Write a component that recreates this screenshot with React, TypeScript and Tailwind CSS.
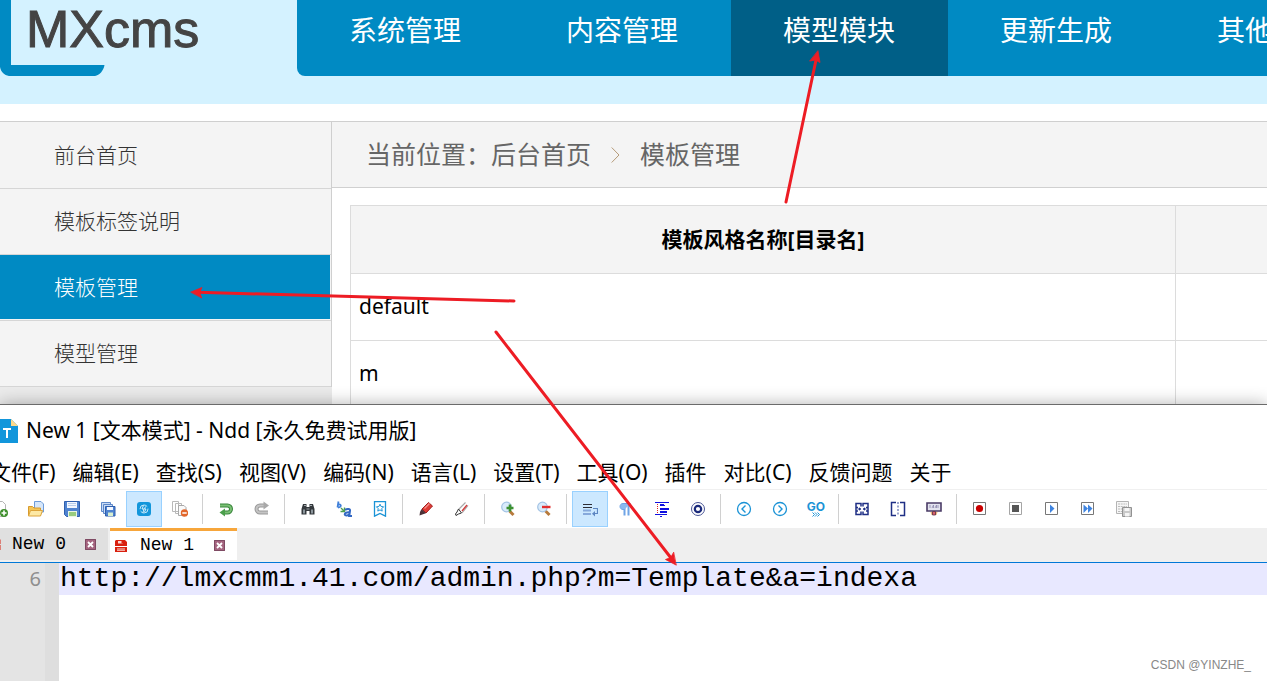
import React from 'react';
import clsx from 'clsx';

const NAV = ['系统管理', '内容管理', '模型模块', '更新生成', '其他'];
const SIDE = ['前台首页', '模板标签说明', '模板管理', '模型管理'];
const MENU = ['文件(F)', '编辑(E)', '查找(S)', '视图(V)', '编码(N)', '语言(L)', '设置(T)', '工具(O)', '插件', '对比(C)', '反馈问题', '关于'];

/* ── 16px toolbar drawings ── */
const ICONS: Record<string, React.ReactNode> = {
  new: (
    <>
      <path d="M2.5 .5h8l3 3v12h-11z" fill="#fff" stroke="#b5b5b5" />
      <circle cx="12" cy="12" r="4" fill="#3f8f2c" />
      <path d="M12 9.5v5M9.5 12h5" stroke="#fff" strokeWidth="1.6" />
    </>
  ),
  open: (
    <>
      <path d="M6.500 .5h6.500l2.500 2.500v8h-9z" fill="#d5e6fa" stroke="#6d9bd8" />
      <path d="M.5 14.500v-9h4l1.500 1.500h6.500v7.500z" fill="#f3c557" stroke="#d79a2e" />
      <path d="M.5 15l2-5.500h12L12.500 15z" fill="#fde9a5" stroke="#dda43a" />
    </>
  ),
  save: (
    <>
      <path d="M.5 .5h15v15H2.500l-2-2z" fill="#4f83d0" stroke="#2f5fae" />
      <path d="M3 1h10v6H3z" fill="#f2f7ff" />
      <path d="M4 2.500h8M4 4.500h8" stroke="#b8cdea" />
      <path d="M4 10h9v6H4z" fill="#e9f5e2" />
      <path d="M5 12h7M5 14h7" stroke="#7fbf5f" strokeWidth="1.400" />
    </>
  ),
  saveAll: (
    <>
      <path d="M1.500 1.500h9v9h-9z" fill="#c9dbf4" stroke="#5d88c9" />
      <path d="M3.500 3.500h9v9h-9z" fill="#c9dbf4" stroke="#5d88c9" />
      <path d="M5.500 5.500h9.500V15h-9.500z" fill="#4f83d0" stroke="#2f5fae" />
      <path d="M7 6h6v3H7z" fill="#f2f7ff" />
      <path d="M8 11.500h5V15H8z" fill="#d9efcf" />
    </>
  ),
  sync: (
    <>
      <rect x="1" y="1" width="14" height="14" rx="3" fill="#1296db" />
      <circle cx="8" cy="8" r="4" fill="none" stroke="#d3eefb" strokeWidth=".9" strokeDasharray="10 2" />
      <path d="M7.500 4.500 6 8h2l-1 3.500M9.500 5.500 8.500 8H10l-1.500 3" fill="none" stroke="#fff" strokeWidth=".8" />
    </>
  ),
  closeAll: (
    <>
      <path d="M.5 .5h6v10h-6zM3.500 2.500h6v10h-6z" fill="#fff" stroke="#b9b9b9" />
      <path d="M6.500 4.500H12l2 2v8H6.500z" fill="#fafafa" stroke="#a9a9a9" />
      <circle cx="12.500" cy="12" r="3.700" fill="#e2662b" />
      <path d="M10.300 12h4.400" stroke="#fff" strokeWidth="1.500" />
    </>
  ),
  undo: (
    <>
      <path d="M2 4.500h7.500a3.500 3.500 0 0 1 0 7H6" fill="none" stroke="#37843a" strokeWidth="4" />
      <path d="M2 4.500h7.500a3.500 3.500 0 0 1 0 7H6" fill="none" stroke="#79bf73" strokeWidth="2" />
      <path d="M7 7.500v8L1.500 11.500z" fill="#4a9e4b" />
    </>
  ),
  redo: (
    <>
      <path d="M14 11.500H6a3.500 3.500 0 0 1 0-7h4" fill="none" stroke="#999" strokeWidth="4" />
      <path d="M14 11.500H6a3.500 3.500 0 0 1 0-7h4" fill="none" stroke="#c4c4c4" strokeWidth="2" />
      <path d="M9.500 .5v8L15 4.500z" fill="#a9a9a9" />
    </>
  ),
  find: (
    <>
      <path d="M3 3h3.500v3h3V3H13l1.500 5v5.500H9.500V10h-3v3.500h-5V8z" fill="#34393d" />
      <path d="M3 8.500h2v4H3zM11 8.500h2v4h-2z" fill="#8b959b" />
      <path d="M4 4.500h2M10 4.500h2M6.500 8h3" stroke="#a1a9ad" />
    </>
  ),
  replace: (
    <>
      <path d="M2.500 .5 1.500 6.500M2 3.800c3.500-1.500 4 2.700 0 2.700" fill="none" stroke="#3f7fd9" strokeWidth="1.800" />
      <path d="m5 7 3 3M8.500 6.500v4h-4" fill="none" stroke="#4fa050" strokeWidth="1.400" />
      <path d="M9 8.800c2-1.300 5.500-1.300 5 1l-.8 5.200H16M13.800 11.500c-3-.5-5.300.5-5 2s3.500 1.300 4.500-.5" fill="none" stroke="#3268c4" strokeWidth="2" />
    </>
  ),
  bookmark: (
    <>
      <path d="M2.500 .7h11v14.500L8 12.500l-5.500 2.700z" fill="#fff" stroke="#1b93d6" strokeWidth="1.300" />
      <path d="m8 3.200 1.100 2.300 2.500.3-1.800 1.800.4 2.500L8 8.900l-2.200 1.200.4-2.500-1.800-1.800 2.500-.3z" fill="none" stroke="#1b93d6" />
    </>
  ),
  marker: (
    <>
      <path d="m4 8 6.500-6.500L14.500 5 8 12z" fill="#df3b35" stroke="#a31d1d" />
      <path d="m6.500 7.500 5-5" stroke="#f4938d" strokeWidth="1.300" />
      <path d="m3.500 8 4.500 4.300-3 1-3.500 1.200.5-3.500z" fill="#4b3138" />
    </>
  ),
  clearMark: (
    <>
      <path d="m4.500 8.500 7-7M8 12l6-7.500" stroke="#a9a9a9" strokeWidth="1.200" />
      <path d="m8 10 5-6" stroke="#d33b3b" strokeWidth="1.400" />
      <path d="M4.500 8 7.500 12l-3 1-2.500 1.500-.5-1.500 1.500-2z" fill="#fff" stroke="#333" />
    </>
  ),
  zoomIn: (
    <>
      <path d="m9.500 10 4 4" stroke="#b77a3c" strokeWidth="3" />
      <circle cx="6.500" cy="6" r="4.800" fill="#d9ebfb" stroke="#a3c3e4" strokeWidth="1.200" />
      <path d="M10 3.500v7M6.500 7h7" stroke="#3c9131" strokeWidth="2.600" />
    </>
  ),
  zoomOut: (
    <>
      <path d="m9.500 10 4 4" stroke="#b77a3c" strokeWidth="3" />
      <circle cx="6.500" cy="6" r="4.800" fill="#d9ebfb" stroke="#a3c3e4" strokeWidth="1.200" />
      <path d="M6 6h8.500" stroke="#e32f2f" strokeWidth="2.400" />
    </>
  ),
  wrap: (
    <>
      <path d="M1 3.500h9M1 6.500h9" stroke="#2d2d35" strokeWidth="1.200" />
      <path d="M1 9.500h8M1 13h8" stroke="#86a9dc" strokeWidth="2" />
      <path d="M11 7.500h4.500v5H12" fill="none" stroke="#5d86c2" strokeWidth="1.200" />
      <path d="M13 10v5.500l-3-2.800z" fill="#5d86c2" />
    </>
  ),
  pilcrow: (
    <>
      <path d="M6.500 2v12.500M10.500 2v12.500" stroke="#6fa4e6" strokeWidth="2" />
      <path d="M12.500 2.500H5C1 2.500 1 8.500 5 8.500h1.500" fill="#8ab8ef" stroke="#6fa4e6" />
    </>
  ),
  indent: (
    <>
      <path d="M1 1h14v1H1zM6 4h5v1H6zM6 7h9v2H6zM6 10h7v2H6zM1 13h12v1H1zM6 15h2v1H6z" fill="#1010e0" />
      <path d="M6 3h4v2H6z" fill="#1010e0" />
      <path d="M3.500 3v9.500" stroke="#e02020" strokeDasharray="1 1" />
    </>
  ),
  target: (
    <>
      <circle cx="8" cy="8" r="6.500" fill="none" stroke="#4a5596" />
      <circle cx="8" cy="8" r="3.200" fill="#fff" stroke="#1b2a7b" strokeWidth="2.200" />
    </>
  ),
  back: (
    <>
      <circle cx="8" cy="8" r="6.500" fill="none" stroke="#1b93d6" strokeWidth="1.300" />
      <path d="M9.500 4.500 6 8l3.500 3.500" fill="none" stroke="#1b93d6" strokeWidth="1.400" />
    </>
  ),
  forward: (
    <>
      <circle cx="8" cy="8" r="6.500" fill="none" stroke="#1b93d6" strokeWidth="1.300" />
      <path d="M6.500 4.500 10 8l-3.500 3.500" fill="none" stroke="#1b93d6" strokeWidth="1.400" />
    </>
  ),
  split: (
    <>
      <path d="M7 5.500v-3H2v4h2M2 6v4h2M2 9.500v4h5v-3M9 5.500v-3h5v4h-2M14 6v4h-2M14 9.500v4H9v-3" fill="none" stroke="#1f2f85" strokeWidth="1.500" />
      <path d="M3.500 8H7M9 8h3.500" stroke="#1f2f85" strokeWidth="1.200" />
      <path d="M5 6.200 7.200 8 5 9.800zM11 6.200 8.800 8 11 9.800z" fill="#1f2f85" />
    </>
  ),
  compare: (
    <>
      <path d="M6 1.500H1.500v13H6M10 1.500h4.500v13H10" fill="none" stroke="#1f2f85" strokeWidth="1.500" />
      <path d="M8 1v14" stroke="#7380b8" strokeWidth="1.400" strokeDasharray="2 1.500" />
    </>
  ),
  monitor: (
    <>
      <path d="M1 2h14v8H1z" fill="#e3e3ee" stroke="#4a3b66" strokeWidth="1.600" />
      <path d="M4 4v3M6 7l1.500-3V7M9 7l1.500-3V7M12 4v3" fill="none" stroke="#8b87ac" strokeWidth=".8" />
      <path d="M4.500 11h7l-1 3h-5z" fill="#efb878" />
      <path d="M6.500 10.500h3V14h-3z" fill="#d9606c" stroke="#5a2e46" strokeWidth=".8" />
    </>
  ),
  record: (
    <>
      <path d="M1.500 1.500h12v12h-12z" fill="#fff" stroke="#777" />
      <circle cx="7.500" cy="7.500" r="3.600" fill="#c90000" />
    </>
  ),
  stop: (
    <>
      <path d="M1.500 1.500h12v12h-12z" fill="#fff" stroke="#a5a5a5" />
      <path d="M4 4h7v7H4z" fill="#555" />
    </>
  ),
  play: (
    <>
      <path d="M1.500 1.500h12v12h-12z" fill="#fff" stroke="#777" />
      <path d="M6 3.500 10.500 7.500 6 12z" fill="#3f84e0" />
    </>
  ),
  playAll: (
    <>
      <path d="M1.500 1.500h12v12h-12z" fill="#fff" stroke="#777" />
      <path d="M3.500 3.500 8 7.500 3.500 12zM8 3.500l4.500 4L8 12z" fill="#3f84e0" />
    </>
  ),
  saveMacro: (
    <>
      <path d="M.5 .5h12v12H.5z" fill="#f6f6f6" stroke="#b4b4b4" />
      <path d="M2 3h9M2 5.500h9M2 8h4M2 10.500h4" stroke="#bcbcbc" strokeDasharray="2 .7" />
      <path d="M6.500 6.500h9v9h-9z" fill="#c9c9c9" stroke="#929292" />
      <path d="M8.500 7h5v3h-5zM9 12h4.500v3.500H9z" fill="#f5f5f5" />
    </>
  ),
};

const TOOL_GROUPS = [
  ['new', 'open', 'save', 'saveAll', 'sync', 'closeAll'],
  ['undo', 'redo'],
  ['find', 'replace', 'bookmark'],
  ['marker', 'clearMark'],
  ['zoomIn', 'zoomOut'],
  ['wrap', 'pilcrow', 'indent', 'target'],
  ['back', 'forward', 'go'],
  ['split', 'compare', 'monitor'],
  ['record', 'stop', 'play', 'playAll', 'saveMacro'],
];

const PRESSED = ['sync', 'wrap'];

const ToolButton: React.FC<{ name: string }> = ({ name }) => (
  <button
    aria-label={name}
    className={clsx(
      'w-9 h-9 shrink-0 flex flex-col items-center justify-center border',
      PRESSED.includes(name) ? 'bg-[#cce8ff] border-[#99d1ff]' : 'border-transparent',
    )}
  >
    {name === 'go' ? (
      <>
        <span className="font-['Inter'] font-bold text-[12px] leading-[10px] text-[#1b93d6]">GO</span>
        <svg width="8" height="5" viewBox="0 0 8 5" fill="none" stroke="#1b93d6">
          <path d="M.5 .5l2 2-2 2M3 .5l2 2-2 2M5.500 .5l2 2-2 2" />
        </svg>
      </>
    ) : (
      <svg width="16" height="16" viewBox="0 0 16 16" fill="none">{ICONS[name]}</svg>
    )}
  </button>
);

const TabClose: React.FC<{ label: string }> = ({ label }) => (
  <button aria-label={label} className="w-[11px] h-[11px] shrink-0 bg-[#a5647f]">
    <svg width="11" height="11" viewBox="0 0 11 11" fill="none">
      <path d="M.5 .5h10v10H.5z" stroke="#7e4a63" />
      <path d="m3 3 5 5M8 3 3 8" stroke="#fff" strokeWidth="1.800" />
    </svg>
  </button>
);

const DiskIcon: React.FC<{ className?: string }> = ({ className }) => (
  <svg width="12" height="12" viewBox="0 0 12 12" className={clsx('shrink-0', className)}>
    <path d="M1 0h9l2 2v4H0V1zM0 7h12v5H0z" fill="#d9200f" />
    <path d="M3 1h5v2.500H3zM2 8.500h8v1H2zM2 10.300h8v.8H2z" fill="#fbd9d4" />
    <path d="M6.500 1h1.500v2.500H6.500z" fill="#d9200f" />
  </svg>
);

function Header() {
  return (
    <header className="h-[104px] bg-[#d4f2ff] flex items-start overflow-hidden">
      <div className="relative w-[297px] h-[76px] shrink-0">
        <svg width="106" height="76" viewBox="0 0 106 76" className="block">
          <path d="M0 0h11v65h93.500c-1 6-5 10-9.500 11H9c-5-1-8-4-9-9z" fill="#008ac3" />
        </svg>
        <span className="absolute left-[26px] top-0 font-['Liberation_Sans'] text-[52px] leading-[58px] text-[#444] [-webkit-text-stroke:1px_#444]">MXcms</span>
      </div>
      <nav className="flex-1 min-w-0 h-[76px] flex bg-[#008ac3] rounded-bl-lg overflow-hidden">
        {NAV.map((item, i) => (
          <a key={item} href="#" className={clsx('w-[217px] shrink-0 pl-13 text-[28px] leading-[60px] text-white whitespace-nowrap', i === 2 && 'bg-[#005f87]')}>
            {item}
          </a>
        ))}
      </nav>
    </header>
  );
}

function Sidebar() {
  return (
    <aside className="w-[332px] shrink-0 bg-[#ebebeb]">
      <ul className="bg-[#f4f4f4] border-r border-[#cfcfcf] pt-px">
        {SIDE.map((item, i) => (
          <li key={item} className="h-[66px] border-b border-[#d6d6d6] pr-px">
            <a
              href="#"
              className={clsx(
                'block pl-[54px] text-[21px] leading-[64px] font-light',
                i === 2 ? 'bg-[#008ac3] text-white' : 'text-[#333]',
              )}
            >
              {item}
            </a>
          </li>
        ))}
      </ul>
    </aside>
  );
}

function TemplateList() {
  return (
    <main className="flex-1 min-w-0">
      <div className="h-[66px] pl-[34px] flex items-center bg-[#f4f4f4] border-b border-[#d0d0d0] text-[25px] text-[#666]">
        <span>当前位置：</span>
        <a href="#">后台首页</a>
        <svg width="9" height="16" viewBox="0 0 9 16" fill="none" className="mx-5">
          <path d="M.7 .5 8 8 .7 15.500" stroke="#b59a78" />
        </svg>
        <a href="#">模板管理</a>
      </div>
      <div className="pl-[18px] pt-[17px]">
        <table className="w-full table-fixed border-collapse text-[21px] text-black">
          <thead>
            <tr className="h-[68px] bg-[#f4f4f4]">
              <th className="w-[90%] border border-[#dcdcdc] font-bold">模板风格名称[目录名]</th>
              <th className="border-y border-[#dcdcdc]" />
            </tr>
          </thead>
          <tbody>
            {['default', 'm'].map((name) => (
              <tr key={name} className="h-[67px]">
                <td className="border border-[#dcdcdc] pl-2">{name}</td>
                <td className="border-y border-[#dcdcdc]" />
              </tr>
            ))}
          </tbody>
        </table>
      </div>
    </main>
  );
}

function EditorWindow() {
  return (
    <section className="relative flex-1 flex flex-col bg-white border-t border-[#6b6b6b] shadow-[0_0_16px_rgba(0,0,0,0.3)]">
      <div className="h-[52px] flex items-center gap-2 text-[21px] text-black">
        <svg width="18" height="24" viewBox="0 0 18 24" className="shrink-0">
          <path d="M0 0h11l7 7v17H0z" fill="#1296db" />
          <path d="M11 0l7 7h-7z" fill="#ffd98a" />
          <path d="M3 10h8M7 10v9" stroke="#fff" strokeWidth="2" />
        </svg>
        <h1>New 1 [文本模式] - Ndd [永久免费试用版]</h1>
      </div>
      <div className="h-8 -ml-2.5 flex items-center gap-[17px] text-[21px] text-black">
        {MENU.map((item) => (
          <button key={item} className="shrink-0 whitespace-nowrap">{item}</button>
        ))}
      </div>
      <div className="h-[39px] -ml-[18px] flex items-center border-t border-[#f0f0f0]">
        {TOOL_GROUPS.map((group, i) => (
          <React.Fragment key={group[0]}>
            {i > 0 && <div className="w-px h-[30px] shrink-0 mr-[5px] ml-1 bg-[#d0d0d0]" />}
            {group.map((name) => <ToolButton key={name} name={name} />)}
          </React.Fragment>
        ))}
      </div>
      <div className="h-[35px] flex items-start bg-[#efefef] border-b border-[#0078d7] font-['Liberation_Mono'] text-[18px] text-black overflow-hidden">
        <div className="w-[108px] h-8 flex items-center bg-[#e0e0e0]">
          <DiskIcon className="-ml-[11px] opacity-50" />
          <button className="ml-[11px] mr-[19px]">New 0</button>
          <TabClose label="Close New 0" />
        </div>
        <div className="w-[127px] h-8 ml-0.5 pl-[5px] flex items-center bg-white border-t-3 border-[#f7a63b]">
          <DiskIcon />
          <button className="ml-[13px] mr-5">New 1</button>
          <TabClose label="Close New 1" />
        </div>
      </div>
      <div className="flex-1 flex">
        <div className="w-[45px] pr-1 bg-[#e4e4e4] text-right text-[20px] leading-8 text-[#8f8f8f]">6</div>
        <div className="w-[14px] bg-[#dedede]" />
        <textarea
          aria-label="New 1"
          spellCheck={false}
          wrap="off"
          defaultValue="http://lmxcmm1.41.com/admin.php?m=Template&a=indexa"
          className="flex-1 pl-px resize-none outline-none overflow-hidden bg-[linear-gradient(#e8e8ff_32px,#fff_32px)] font-['Liberation_Mono'] text-[28px] leading-8 text-black"
        />
      </div>
      <p className="absolute right-4 bottom-2 font-['Liberation_Sans'] text-[12px] leading-4 text-[#888]">CSDN @YINZHE_</p>
    </section>
  );
}

/* Red pointers drawn over the page */
function Arrows() {
  return (
    <svg className="absolute left-0 top-0 pointer-events-none" width="900" height="600" viewBox="0 0 900 600" fill="#ed1c24" stroke="#ed1c24" strokeLinecap="round">
      <path d="M514 301 198 292.300M786 202 816 60M496 332 671 558" strokeWidth="3" />
      <path d="m191 292 11-4.500-2.500 5 2.200 5.200zM818 51l2 11.500-4.500-2.500-5.500 1zM676 565l-10.500-5.500 5.200-2 2.800-5z" strokeWidth=".8" />
    </svg>
  );
}

export default function App() {
  return (
    <div className="relative min-h-screen flex flex-col bg-white overflow-hidden font-['Noto_Sans','Noto_Sans_CJK_SC',sans-serif]">
      <Header />
      <div className="h-[283px] mt-[17px] flex border-t border-[#cfcfcf] overflow-hidden">
        <Sidebar />
        <TemplateList />
      </div>
      <EditorWindow />
      <Arrows />
    </div>
  );
}
